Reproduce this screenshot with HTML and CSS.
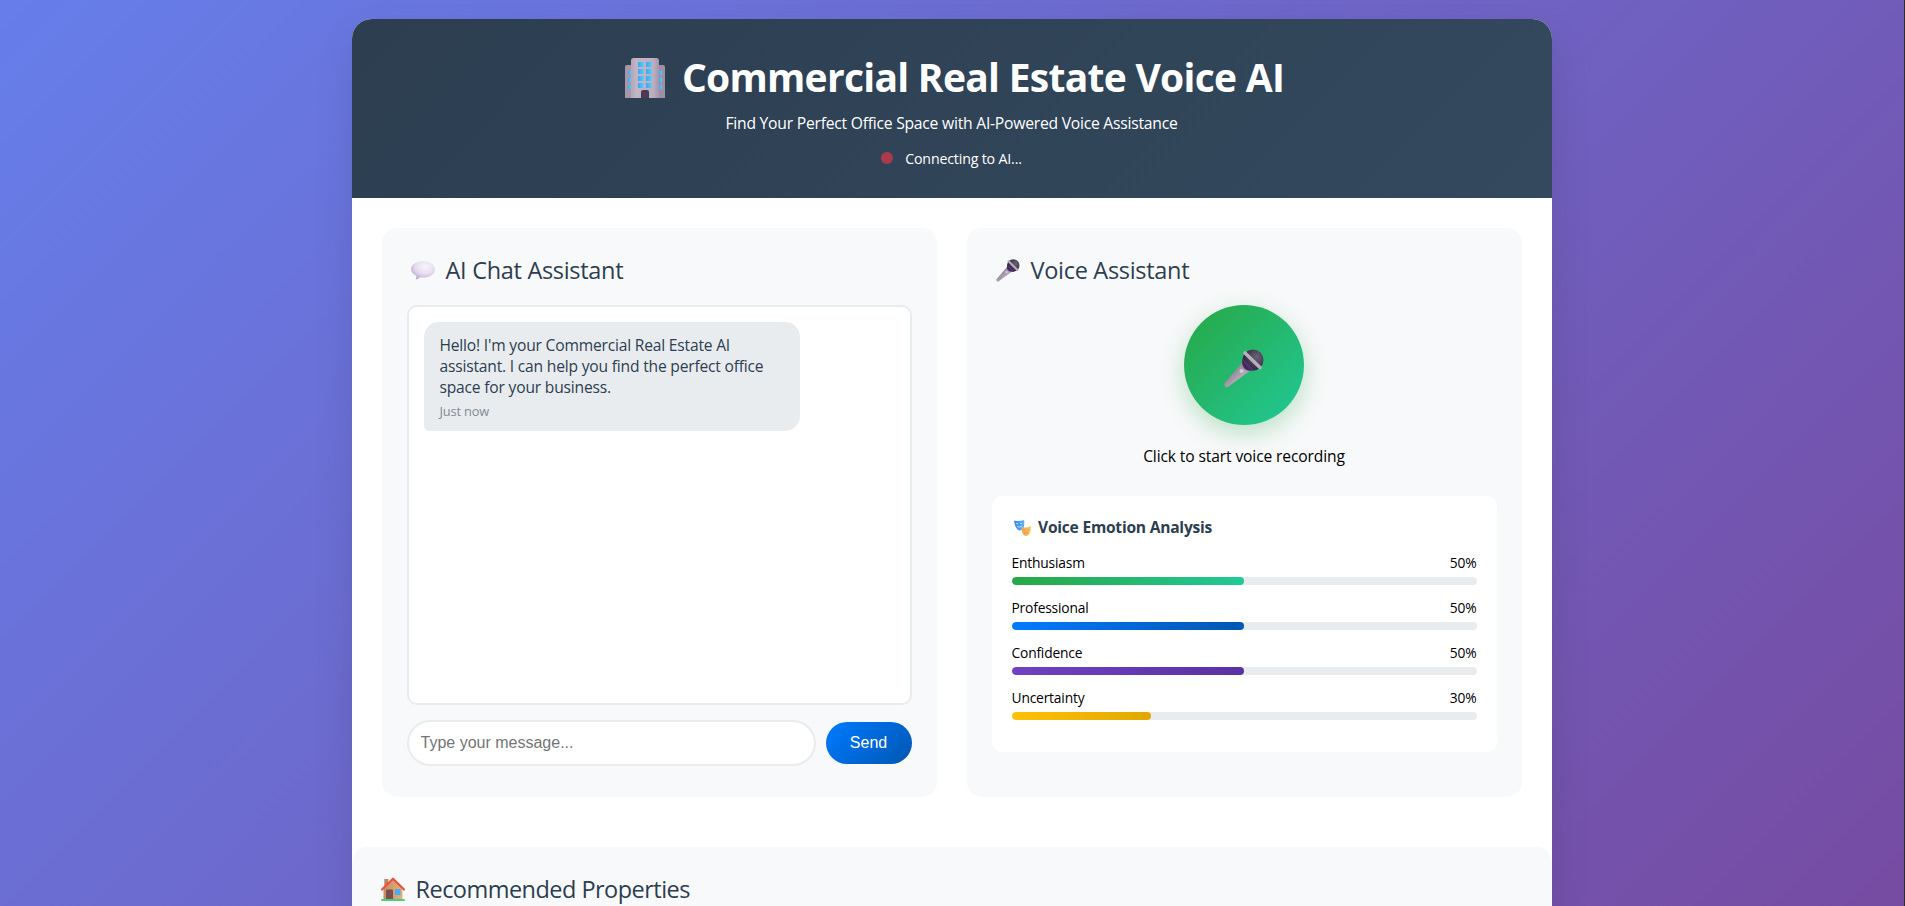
FILE: index.html
```html
<!DOCTYPE html>
<html lang="en">
<head>
<meta charset="utf-8">
<title>Commercial Real Estate Voice AI</title>
<link rel="stylesheet" href="styles.css">
</head>
<body>
<svg width="0" height="0" class="defs" aria-hidden="true">
  <defs>
    <linearGradient id="wall" x1="0" x2="1"><stop offset="0" stop-color="#b3a6b8"/><stop offset=".2" stop-color="#c2b5c6"/><stop offset=".8" stop-color="#baaebf"/><stop offset="1" stop-color="#a396ab"/></linearGradient>
    <linearGradient id="glass" x1="0" x2="1"><stop offset="0" stop-color="#3fa4f2"/><stop offset="1" stop-color="#4fd0ff"/></linearGradient>
    <radialGradient id="bubble" cx=".6" cy=".3" r=".75"><stop offset="0" stop-color="#f8f3fb"/><stop offset=".55" stop-color="#e6dcef"/><stop offset="1" stop-color="#b9a3d2"/></radialGradient>
    <radialGradient id="head" cx=".68" cy=".35" r=".6"><stop offset="0" stop-color="#6b6274"/><stop offset="1" stop-color="#352a40"/></radialGradient>
    <linearGradient id="handle" x1="0" y1="0" x2="1" y2="1"><stop offset=".3" stop-color="#8b8190"/><stop offset=".6" stop-color="#b1a7b6"/><stop offset="1" stop-color="#8e8495"/></linearGradient>
    <linearGradient id="maskBlue" x1="0" x2="1"><stop offset="0" stop-color="#3b82e8"/><stop offset="1" stop-color="#5bb6fb"/></linearGradient>
    <linearGradient id="maskGold" x1="0" x2="1"><stop offset="0" stop-color="#f3a45c"/><stop offset="1" stop-color="#ffc45a"/></linearGradient>
    <linearGradient id="house" x1="0" x2="1"><stop offset="0" stop-color="#c58c60"/><stop offset="1" stop-color="#e9b07a"/></linearGradient>
    <symbol id="mic" viewBox="0 0 40 39">
      <path d="M18.5 13 26.5 21.5 4.5 37.6Q2.5 39 1 37.3T1.2 33.6Z" fill="url(#handle)"/>
      <path d="M20 9 31 20.5Q25 23 21.5 20.5 17 17 18.5 11Z" fill="#4d2c6e"/>
      <circle cx="29" cy="11" r="10.5" fill="url(#head)"/>
      <path d="M18.6 9.5 20.4 15 25.5 20.4 31 21.6Z" fill="#532f76"/>
      <path d="M21 4 36 18.5" stroke="#b8adbd" stroke-width="3.6" stroke-linecap="round"/>
      <circle cx="17.5" cy="22" r="2" fill="#d2cad7"/>
    </symbol>
  </defs>
</svg>
<div class="container">
  <header class="header">
    <h1 class="title">
      <svg class="title-icon" viewBox="0 0 40 40">
        <path d="M0 40V9Q0 7 2 7H9V40Z" fill="#a397a9"/><path d="M31 7H38Q40 7 40 9V40H31Z" fill="#9d90a5"/>
        <path d="M6 40V2.500Q6 0 8.500 0H31.500Q34 0 34 2.500V40Z" fill="url(#wall)"/>
        <g fill="url(#glass)"><rect x="13" y="4" width="5.700" height="5"/><rect x="21" y="4" width="5.700" height="5"/><rect x="13" y="11" width="5.700" height="5"/><rect x="21" y="11" width="5.700" height="5"/><rect x="13" y="18" width="5.700" height="5"/><rect x="21" y="18" width="5.700" height="5"/><rect x="13" y="25" width="5.700" height="5"/><rect x="21" y="25" width="5.700" height="5"/>
        <rect x="3" y="13" width="3" height="4"/><rect x="3" y="20" width="3" height="4"/><rect x="3" y="27" width="3" height="4"/><rect x="34" y="13" width="3" height="4"/><rect x="34" y="20" width="3" height="4"/><rect x="34" y="27" width="3" height="4"/></g>
        <path d="M16 40V34Q16 32 18 32H22Q24 32 24 34V40Z" fill="#4a3a55"/>
      </svg>
      <span>Commercial Real Estate Voice AI</span>
    </h1>
    <p class="subtitle">Find Your Perfect Office Space with AI-Powered Voice Assistance</p>
    <div class="status"><i class="status-dot"></i><span class="status-text">Connecting to AI...</span></div>
  </header>

  <main class="main">
    <section class="card">
      <h2 class="card-title">
        <svg class="chat-icon" viewBox="0 0 24 19"><path d="M12 0C18.600 0 24 3.600 24 8.300S18.600 16.600 12 16.600Q10.500 16.600 9.200 16.300C8 17.600 6.200 18.600 4.600 18.500 5.400 17.400 5.500 16 5.200 14.900 2 13.400 0 11 0 8.300 0 3.600 5.400 0 12 0Z" fill="url(#bubble)"/></svg>
        <span>AI Chat Assistant</span>
      </h2>
      <div class="chat-box">
        <div class="message">
          <p class="message-text">Hello! I'm your Commercial Real Estate AI<br>assistant. I can help you find the perfect office<br>space for your business.</p>
          <p class="message-time">Just now</p>
        </div>
      </div>
      <div class="composer">
        <input class="composer-input" type="text" placeholder="Type your message...">
        <button class="send">Send</button>
      </div>
    </section>

    <section class="card">
      <h2 class="card-title">
        <svg class="mic-small"><use href="#mic"/></svg>
        <span>Voice Assistant</span>
      </h2>
      <div class="voice">
        <button class="record" aria-label="Record"><svg class="mic-large"><use href="#mic"/></svg></button>
        <p class="voice-hint">Click to start voice recording</p>
      </div>
      <div class="emotions">
        <h3 class="emotions-title">
          <svg class="masks" viewBox="0 0 17 16"><path d="M0 .5Q5 1.800 10 0 11 6 8.800 9 7 11 4.700 10.300 1 8.500 0 .5Z" fill="url(#maskBlue)"/><path d="M2 3.700h2M6 3.400h2M3 6.500Q5.500 8 8 6" stroke="#a6e0ff" stroke-width="1" fill="none"/><path d="M7.500 7Q12 8.200 17 6.200 17 11.500 15 14.500 12.500 17 9.500 15 7.200 12 7.500 7Z" fill="url(#maskGold)"/><path d="M9.200 10h2M13.200 9.800h2M10 13.600Q12 11.500 14.200 13.200" stroke="#d98549" stroke-width=".8" fill="none"/></svg>
          <span>Voice Emotion Analysis</span>
        </h3>
        <div class="emotion"><div class="emotion-row"><span>Enthusiasm</span><span>50%</span></div><div class="bar"><div class="fill green" style="width:50%"></div></div></div>
        <div class="emotion"><div class="emotion-row"><span>Professional</span><span>50%</span></div><div class="bar"><div class="fill blue" style="width:50%"></div></div></div>
        <div class="emotion"><div class="emotion-row"><span>Confidence</span><span>50%</span></div><div class="bar"><div class="fill purple" style="width:50%"></div></div></div>
        <div class="emotion"><div class="emotion-row"><span>Uncertainty</span><span>30%</span></div><div class="bar"><div class="fill yellow" style="width:30%"></div></div></div>
      </div>
    </section>
  </main>

  <section class="properties">
    <h2 class="card-title properties-title">
      <svg class="house-icon" viewBox="0 0 24 24"><path d="M3.300 2h4v8h-4Z" fill="#b98662"/><path d="M2.500 11 12 2.500 21.500 11V22.500H2.500Z" fill="url(#house)"/><path d="M1 12.500 12 1.700 23 12.500" fill="none" stroke="#e8523f" stroke-width="2.200" stroke-linecap="round" stroke-linejoin="round"/><rect x="5" y="12.500" width="7" height="10" rx="1" fill="#7b4f4b"/><rect x="14" y="12" width="5.500" height="6" fill="#44b0f5"/><rect x="0" y="22" width="24" height="2" rx="1" fill="#4bce7b"/></svg>
      <span>Recommended Properties</span>
    </h2>
  </section>
</div>
</body>
</html>
```
FILE: styles.css
```css
* { box-sizing: border-box; margin: 0; padding: 0; }
html { height: 100%; overflow: hidden; }
body {
  height: 906px;
  overflow: hidden;
  padding: 19px 1px 0 0;
  border-right: 1px solid #2b2b2b;
  background: linear-gradient(135deg, #667eea 0%, #764ba2 100%);
  font-family: "Open Sans", "Noto Sans", sans-serif;
  color: #000;
}
.defs { position: absolute; }
svg { display: block; flex: none; }
.container {
  width: 1200px;
  height: 887px;
  margin: 0 auto;
  background: #fff;
  border-radius: 20px 20px 0 0;
  overflow: hidden;
  box-shadow: 0 20px 40px rgba(0, 0, 0, .1);
}
.header {
  height: 179px;
  padding-top: 30px;
  background: linear-gradient(135deg, #2c3e50, #34495e);
  color: #fff;
  text-align: center;
}
.title { display: flex; justify-content: center; align-items: center; height: 58px; font-size: 39px; line-height: 56px; letter-spacing: -.72px; }
.title span { padding-bottom: 2px; }
.title-icon { width: 40px; height: 40px; margin: 0 17px 0 6px; }
.subtitle { height: 21px; margin-top: 6px; font-size: 15.7px; line-height: 21px; letter-spacing: -.24px; }
.status { display: flex; justify-content: center; align-items: center; height: 20px; margin-top: 14px; font-size: 14.2px; line-height: 20px; letter-spacing: -.17px; }
.status-text { padding-top: 1px; }
.status-dot { width: 12px; height: 12px; margin-right: 12px; border-radius: 50%; background: #ad3a4c; }
.main { display: grid; grid-template-columns: 1fr 1fr; gap: 30px; height: 599px; padding: 30px; }
.card { height: 569px; padding: 25px; background: #f8f9fa; border-radius: 15px; }
.card-title { display: flex; align-items: center; height: 32px; margin-bottom: 20px; color: #2c3e50; font-size: 23.5px; font-weight: 400; line-height: 32px; letter-spacing: -.3px; }
.card-title span { padding-top: 2px; }
.chat-icon { width: 24px; height: 19px; margin: 2px 11px 0 4px; }
.mic-small { width: 24px; height: 23px; margin: 3px 11px 0 4px; }
.chat-box { height: 400px; margin-bottom: 15px; padding: 15px; background: #fff; border: 2px solid #e9ecef; border-radius: 10px; }
.message { width: 376px; height: 109px; padding: 13px 16px; background: #e9ecef; border-radius: 15px 15px 15px 5px; color: #2c3e50; }
.message-text { font-size: 15.6px; line-height: 21px; letter-spacing: -.19px; white-space: nowrap; }
.message-time { margin-top: 5px; color: #808a94; font-size: 12.8px; line-height: 17px; letter-spacing: -.15px; }
.composer { display: flex; align-items: center; gap: 10px; }
.composer-input { flex: 1; min-width: 0; height: 46px; padding: 0 12px; border: 2px solid #e9ecef; border-radius: 25px; background: #fff; font: 16px "Liberation Sans", Arial, sans-serif; }
.composer-input::placeholder { color: #757575; }
.send { width: 86px; height: 42px; border: 0; border-radius: 25px; background: linear-gradient(135deg, #007bff, #0056b3); color: #fff; font: 16px "Liberation Sans", Arial, sans-serif; }
.voice { display: flex; flex-direction: column; align-items: center; }
.record { display: flex; align-items: center; justify-content: center; width: 120px; height: 120px; border: 0; border-radius: 50%; background: linear-gradient(135deg, #28a745, #20c997); box-shadow: 0 8px 25px rgba(40, 167, 69, .3); }
.mic-large { width: 40px; height: 39px; margin-top: 6px; }
.voice-hint { margin-top: 19px; font-size: 15.6px; line-height: 24px; letter-spacing: -.12px; }
.emotions { height: 256px; margin-top: 28px; padding: 20px; background: #fff; border-radius: 10px; }
.emotions-title { display: flex; align-items: center; height: 21px; margin-bottom: 15px; color: #2c3e50; font-size: 15.6px; line-height: 21px; letter-spacing: -.24px; }
.emotions-title span { padding-top: 2px; }
.masks { width: 17px; height: 16px; margin: 2px 7.5px 0 2px; }
.emotion { height: 45px; }
.emotion-row { display: flex; justify-content: space-between; height: 25px; font-size: 13.8px; line-height: 22px; letter-spacing: -.18px; }
.bar { height: 8px; border-radius: 4px; background: #e9ecef; overflow: hidden; }
.fill { height: 8px; border-radius: 4px; }
.green { background: linear-gradient(90deg, #28a745, #20c997); }
.blue { background: linear-gradient(90deg, #007bff, #0056b3); }
.purple { background: linear-gradient(90deg, #6f42c1, #5a32a3); }
.yellow { background: linear-gradient(90deg, #ffc107, #e0a800); }
.properties { height: 59px; margin-top: 50px; padding: 25px 25px 0; background: #f8f9fa; border-radius: 15px 15px 0 0; }
.properties-title { letter-spacing: -.53px; }
.house-icon { width: 24px; height: 24px; margin: 2px 11px 0 4px; }
```
